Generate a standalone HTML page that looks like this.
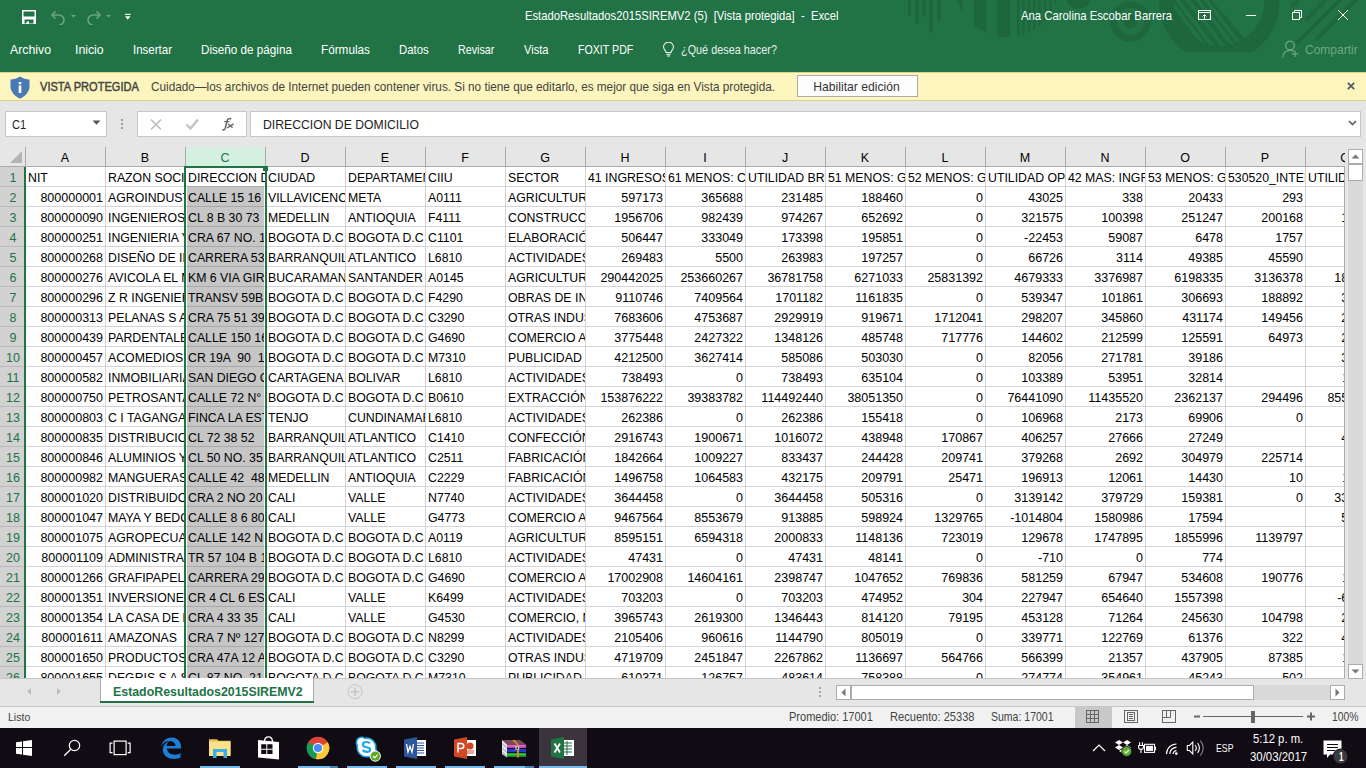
<!DOCTYPE html><html><head><meta charset="utf-8"><style>
*{margin:0;padding:0;box-sizing:border-box}
html,body{width:1366px;height:768px;overflow:hidden;background:#e6e6e6;font-family:"Liberation Sans",sans-serif;position:relative}
.a{position:absolute}
.t{position:absolute;white-space:pre;line-height:1}
.c{position:absolute;height:19px;overflow:hidden;white-space:pre;font-size:12.3px;line-height:23px;color:#000}
.l{padding-left:3px}
.r{text-align:right;padding-right:2px;font-size:12.5px}

</style></head><body>
<div class="a" style="left:0;top:0;width:1366px;height:72px;background:#217346"></div>
<svg class="a" style="left:0;top:0" width="1366" height="72">
<g fill="#1e663e">
<rect x="908" y="0" width="3" height="16"/>
<rect x="915" y="0" width="3.6" height="23.6"/>
<rect x="922.4" y="0" width="3.5" height="16.2"/>
<rect x="929.2" y="0" width="3.8" height="32.4"/>
<rect x="937.3" y="0" width="3.5" height="20.5"/>
<circle cx="1078.6" cy="-4.4" r="13.2"/>
<circle cx="1130.5" cy="21.4" r="7"/>
</g>
<circle cx="1130.5" cy="21.4" r="16.85" fill="none" stroke="#1e663e" stroke-width="6.7"/>
</svg>
<div class="a" style="left:0;top:0;width:1366px;height:72px;clip-path:circle(52px at 1007px -15px)">
<svg class="a" style="left:0;top:0" width="1366" height="72"><g fill="#1e663e">
<rect x="950" y="-20" width="12.8" height="80"/>
<rect x="974" y="-20" width="12.5" height="80"/>
<rect x="997" y="-20" width="13.1" height="80"/>
<rect x="1017" y="-20" width="2.5" height="80"/>
<rect x="1022.2" y="-20" width="2.7" height="80"/>
<rect x="1027.6" y="-20" width="2.9" height="80"/>
<rect x="1033" y="-20" width="2.6" height="80"/>
<rect x="1038.2" y="-20" width="3" height="80"/>
<rect x="1043.7" y="-20" width="2.6" height="80"/>
<rect x="1049.2" y="-20" width="2.6" height="80"/>
<rect x="1054.4" y="-20" width="2.5" height="80"/>
</g></svg></div>
<div class="a" style="left:0;top:0;width:1366px;height:51.7px;overflow:hidden">
<svg class="a" style="left:0;top:0" width="1366" height="72"><circle cx="1219.2" cy="2" r="60.2" fill="#1e663e"/></svg></div>
<div class="a" style="left:0;top:0;width:1366px;height:72px;clip-path:circle(45.5px at 1219px 0.5px)">
<svg class="a" style="left:0;top:0" width="1366" height="72">
<path d="M1206.9 -5 L1260 55.5 L1300 55.5 L1300 -5 Z" fill="#217346"/>
<g stroke="#217346" stroke-width="3.6">
<line x1="1165.7" y1="-5" x2="1209.5" y2="52"/>
<line x1="1173.3" y1="-5" x2="1217.1" y2="52"/>
<line x1="1183.8" y1="-5" x2="1227.6" y2="52"/>
<line x1="1194" y1="-5" x2="1237.8" y2="52"/>
<line x1="1202.1" y1="-5" x2="1245.9" y2="52"/>
</g></svg></div>
<svg class="a" style="left:0;top:0" width="1366" height="72">
<g stroke="#1e663e" stroke-width="4">
<line x1="1291.4" y1="6.75" x2="1300" y2="-1.85"/>
<line x1="1305.4" y1="20.4" x2="1330" y2="-4.2"/>
<line x1="1296.3" y1="43.6" x2="1344" y2="-4.1"/>
<line x1="1315.9" y1="39.7" x2="1360" y2="-4.4"/>
</g>
</svg>
<svg class="a" style="left:22px;top:10px" width="14" height="14" viewBox="0 0 14 14">
<path d="M0 0H14V14H0Z M1.5 1.5V6.5H12.5V1.5Z M2.5 9.5V13.5H4.5V11.5H7V13.5H11.5V9.5Z" fill="#ffffff" fill-rule="evenodd"/></svg>
<svg class="a" style="left:48px;top:7px" width="90" height="18" viewBox="0 0 90 18">
<g fill="none" stroke="#6aa583" stroke-width="1.6">
<path d="M4 8 H11 A5 5 0 0 1 11 18"/><path d="M7.5 4.5 L4 8 L7.5 11.5"/>
<path d="M52 8 H45 A5 5 0 0 0 45 18"/><path d="M48.5 4.5 L52 8 L48.5 11.5"/>
</g>
<path d="M23 8 H28 L25.5 10.5Z" fill="#6aa583"/>
<path d="M58 8 H63 L60.5 10.5Z" fill="#6aa583"/>
<rect x="77" y="6.8" width="5.5" height="1.2" fill="#ffffff"/>
<path d="M77 9.3 H82.5 L79.75 12.8Z" fill="#ffffff"/>
</svg>
<div class="t" style="left:525.00px;top:10px;font-size:12.29px;color:#ffffff;transform:scaleX(0.9153);transform-origin:0 0;">EstadoResultados2015SIREMV2 (5)  [Vista protegida]  -  Excel</div>
<div class="t" style="left:1020.60px;top:10px;font-size:12.29px;color:#ffffff;transform:scaleX(0.9225);transform-origin:0 0;">Ana Carolina Escobar Barrera</div>
<svg class="a" style="left:1190px;top:0" width="176" height="32">
<g fill="none" stroke="#ffffff" stroke-width="1">
<rect x="8.5" y="10.5" width="12" height="9"/>
<line x1="8.5" y1="12.5" x2="20.5" y2="12.5"/>
<line x1="14.5" y1="15" x2="14.5" y2="19.5"/>
<path d="M12.5 16.5 L14.5 14.5 L16.5 16.5"/>
<line x1="56" y1="15.5" x2="66" y2="15.5"/>
<rect x="102.5" y="12.5" width="7" height="7"/>
<path d="M104.5 12.5 V10.5 H111.5 V17.5 H109.5"/>
<path d="M148 10 L158 20 M158 10 L148 20"/>
</g></svg>
<div class="t" style="left:9.80px;top:44px;font-size:12.57px;color:#ffffff;transform:scaleX(0.9804);transform-origin:0 0;">Archivo</div>
<div class="t" style="left:75.00px;top:44px;font-size:12.57px;color:#ffffff;transform:scaleX(0.9778);transform-origin:0 0;">Inicio</div>
<div class="t" style="left:133.00px;top:44px;font-size:12.57px;color:#ffffff;transform:scaleX(0.9152);transform-origin:0 0;">Insertar</div>
<div class="t" style="left:201.00px;top:44px;font-size:12.57px;color:#ffffff;transform:scaleX(0.9293);transform-origin:0 0;">Diseño de página</div>
<div class="t" style="left:321.00px;top:44px;font-size:12.57px;color:#ffffff;transform:scaleX(0.9348);transform-origin:0 0;">Fórmulas</div>
<div class="t" style="left:399.00px;top:44px;font-size:12.57px;color:#ffffff;transform:scaleX(0.9022);transform-origin:0 0;">Datos</div>
<div class="t" style="left:458.40px;top:44px;font-size:12.57px;color:#ffffff;transform:scaleX(0.8519);transform-origin:0 0;">Revisar</div>
<div class="t" style="left:523.90px;top:44px;font-size:12.57px;color:#ffffff;transform:scaleX(0.8856);transform-origin:0 0;">Vista</div>
<div class="t" style="left:578.30px;top:44px;font-size:12.57px;color:#ffffff;transform:scaleX(0.8468);transform-origin:0 0;">FOXIT PDF</div>
<div class="t" style="left:680.70px;top:44px;font-size:12.57px;color:#e6f0ea;transform:scaleX(0.8640);transform-origin:0 0;">¿Qué desea hacer?</div>
<svg class="a" style="left:662px;top:42px" width="13" height="15" viewBox="0 0 13 15">
<path d="M4 10.5 C4 8.5 1.5 7.5 1.5 4.8 A5 4.6 0 0 1 11.5 4.8 C11.5 7.5 9 8.5 9 10.5 Z" fill="none" stroke="#e6f0ea" stroke-width="1.1"/>
<line x1="4.3" y1="12.3" x2="8.7" y2="12.3" stroke="#e6f0ea" stroke-width="1.1"/>
<line x1="5" y1="14" x2="8" y2="14" stroke="#e6f0ea" stroke-width="1.1"/></svg>
<svg class="a" style="left:1282px;top:40px" width="20" height="18" viewBox="0 0 20 18">
<g fill="none" stroke="#6fa585" stroke-width="1.2">
<circle cx="8" cy="5.5" r="4.3"/>
<path d="M0.8 17.5 C1 12.5 4 10.3 8 10.3 C9.5 10.3 10.8 10.7 11.8 11.3"/>
<path d="M13 10.5 V17 M9.8 13.8 H16.2"/>
</g></svg>
<div class="t" style="left:1305.30px;top:44px;font-size:12.57px;color:#6fa585;transform:scaleX(0.9550);transform-origin:0 0;">Compartir</div>
<div class="a" style="left:0;top:72px;width:1366px;height:28px;background:#fcf5bd"></div>
<div class="a" style="left:0;top:100px;width:1366px;height:1px;background:#d9d28e"></div>
<div class="a" style="left:0;top:72px;width:1366px;height:1px;background:#d9d48e"></div>
<svg class="a" style="left:10px;top:76px" width="20" height="23" viewBox="0 0 20 23">
<path d="M10 0.5 C13 2.5 16 3.3 19.5 3.5 V10 C19.5 16 15 20.5 10 22.5 C5 20.5 0.5 16 0.5 10 V3.5 C4 3.3 7 2.5 10 0.5Z" fill="#4a7ab5"/>
<rect x="8.7" y="6" width="2.6" height="2.3" fill="#fff"/><rect x="8.7" y="9.5" width="2.6" height="7.5" fill="#fff"/>
</svg>
<div class="t" style="left:40.20px;top:81px;font-size:12.15px;color:#444;transform:scaleX(0.9124);transform-origin:0 0;-webkit-text-stroke:0.45px #444;">VISTA PROTEGIDA</div>
<div class="t" style="left:150.60px;top:81px;font-size:12.15px;color:#444;transform:scaleX(0.9686);transform-origin:0 0;">Cuidado—los archivos de Internet pueden contener virus. Si no tiene que editarlo, es mejor que siga en Vista protegida.</div>
<div class="a" style="left:797px;top:75px;width:121px;height:22px;background:#fdfdfd;border:1px solid #ababab"></div>
<div class="t" style="left:813.30px;top:81px;font-size:12.15px;color:#333;">Habilitar edición</div>
<svg class="a" style="left:1345px;top:80px" width="12" height="12"><path d="M2.8 2.8 L9.2 9.2 M9.2 2.8 L2.8 9.2" stroke="#505560" stroke-width="1.7"/></svg>
<div class="a" style="left:5px;top:111px;width:102px;height:26px;background:#fff;border:1px solid #c6c6c6"></div>
<div class="t" style="left:12.40px;top:119px;font-size:12.57px;color:#222;transform:scaleX(0.8826);transform-origin:0 0;">C1</div>
<svg class="a" style="left:92px;top:120px" width="9" height="6"><path d="M0.5 0.5 H8.5 L4.5 4.8Z" fill="#555"/></svg>
<div class="a" style="left:121px;top:119px;width:2px;height:2px;background:#9a9a9a"></div>
<div class="a" style="left:121px;top:123px;width:2px;height:2px;background:#9a9a9a"></div>
<div class="a" style="left:121px;top:127px;width:2px;height:2px;background:#9a9a9a"></div>
<div class="a" style="left:137px;top:111px;width:110px;height:26px;background:#fff;border:1px solid #c6c6c6"></div>
<svg class="a" style="left:137px;top:111px" width="110" height="26">
<path d="M14 8.5 L24 18.5 M24 8.5 L14 18.5" stroke="#bababa" stroke-width="1.5" fill="none"/>
<path d="M49.5 13.5 L53.5 17.5 L61 8.5" stroke="#c4c4c4" stroke-width="2.4" fill="none"/>
</svg>
<svg class="a" style="left:200px;top:108px" width="40" height="30"><g fill="none" stroke="#6a6a6a"><path d="M31.2 11.2 C29.8 10 27.6 10.4 27.1 13 L25.3 20.3 C24.8 22 23.5 22.2 22.4 21.4" stroke-width="1.6"/><path d="M24.2 13.6 H29.4" stroke-width="1.3"/><path d="M28.2 15.9 L32.6 19.8 M27.3 19.9 L33.6 15.9" stroke-width="1.4"/></g></svg>
<div class="a" style="left:250px;top:111px;width:1111px;height:26px;background:#fff;border:1px solid #c6c6c6"></div>
<div class="t" style="left:263.00px;top:119px;font-size:12.29px;color:#222;transform:scaleX(0.9932);transform-origin:0 0;">DIRECCION DE DOMICILIO</div>
<svg class="a" style="left:1347px;top:119px" width="11" height="8"><path d="M2 2 L5.5 5.5 L9 2" stroke="#606060" stroke-width="1.7" fill="none"/></svg>
<div class="a" style="left:0;top:0;width:1345px;height:678px;overflow:hidden">
<div class="a" style="left:0;top:148px;width:1345px;height:18px;background:#e6e6e6"></div>
<div class="a" style="left:185px;top:148px;width:80px;height:18px;background:#d3f0e0"></div>
<svg class="a" style="left:0;top:148px" width="25" height="18"><path d="M22 3 L22 15 L10 15 Z" fill="#b4b4b4"/></svg>
<div class="a" style="left:25px;top:147px;width:1px;height:19px;background:#ababab"></div>
<div class="a" style="left:105px;top:147px;width:1px;height:19px;background:#ababab"></div>
<div class="a" style="left:185px;top:147px;width:1px;height:19px;background:#ababab"></div>
<div class="a" style="left:265px;top:147px;width:1px;height:19px;background:#ababab"></div>
<div class="a" style="left:345px;top:147px;width:1px;height:19px;background:#ababab"></div>
<div class="a" style="left:425px;top:147px;width:1px;height:19px;background:#ababab"></div>
<div class="a" style="left:505px;top:147px;width:1px;height:19px;background:#ababab"></div>
<div class="a" style="left:585px;top:147px;width:1px;height:19px;background:#ababab"></div>
<div class="a" style="left:665px;top:147px;width:1px;height:19px;background:#ababab"></div>
<div class="a" style="left:745px;top:147px;width:1px;height:19px;background:#ababab"></div>
<div class="a" style="left:825px;top:147px;width:1px;height:19px;background:#ababab"></div>
<div class="a" style="left:905px;top:147px;width:1px;height:19px;background:#ababab"></div>
<div class="a" style="left:985px;top:147px;width:1px;height:19px;background:#ababab"></div>
<div class="a" style="left:1065px;top:147px;width:1px;height:19px;background:#ababab"></div>
<div class="a" style="left:1145px;top:147px;width:1px;height:19px;background:#ababab"></div>
<div class="a" style="left:1225px;top:147px;width:1px;height:19px;background:#ababab"></div>
<div class="a" style="left:1305px;top:147px;width:1px;height:19px;background:#ababab"></div>
<div class="a" style="left:0;top:166px;width:1345px;height:1px;background:#ababab"></div>
<div class="t" style="left:25px;top:152px;width:80px;text-align:center;font-size:12.5px;color:#000">A</div>
<div class="t" style="left:105px;top:152px;width:80px;text-align:center;font-size:12.5px;color:#000">B</div>
<div class="t" style="left:185px;top:152px;width:80px;text-align:center;font-size:12.5px;color:#217346">C</div>
<div class="t" style="left:265px;top:152px;width:80px;text-align:center;font-size:12.5px;color:#000">D</div>
<div class="t" style="left:345px;top:152px;width:80px;text-align:center;font-size:12.5px;color:#000">E</div>
<div class="t" style="left:425px;top:152px;width:80px;text-align:center;font-size:12.5px;color:#000">F</div>
<div class="t" style="left:505px;top:152px;width:80px;text-align:center;font-size:12.5px;color:#000">G</div>
<div class="t" style="left:585px;top:152px;width:80px;text-align:center;font-size:12.5px;color:#000">H</div>
<div class="t" style="left:665px;top:152px;width:80px;text-align:center;font-size:12.5px;color:#000">I</div>
<div class="t" style="left:745px;top:152px;width:80px;text-align:center;font-size:12.5px;color:#000">J</div>
<div class="t" style="left:825px;top:152px;width:80px;text-align:center;font-size:12.5px;color:#000">K</div>
<div class="t" style="left:905px;top:152px;width:80px;text-align:center;font-size:12.5px;color:#000">L</div>
<div class="t" style="left:985px;top:152px;width:80px;text-align:center;font-size:12.5px;color:#000">M</div>
<div class="t" style="left:1065px;top:152px;width:80px;text-align:center;font-size:12.5px;color:#000">N</div>
<div class="t" style="left:1145px;top:152px;width:80px;text-align:center;font-size:12.5px;color:#000">O</div>
<div class="t" style="left:1225px;top:152px;width:80px;text-align:center;font-size:12.5px;color:#000">P</div>
<div class="t" style="left:1305px;top:152px;width:80px;text-align:center;font-size:12.5px;color:#000">Q</div>
<div class="a" style="left:25px;top:167px;width:1320px;height:512px;background:#fff"></div>
<div class="a" style="left:0;top:167px;width:24px;height:512px;background:#d2d2d2"></div>
<div class="a" style="left:0;top:186px;width:24px;height:1px;background:#bababa"></div>
<div class="t" style="left:0;top:172px;width:26px;text-align:center;font-size:12.5px;color:#217346">1</div>
<div class="a" style="left:0;top:206px;width:24px;height:1px;background:#bababa"></div>
<div class="t" style="left:0;top:192px;width:26px;text-align:center;font-size:12.5px;color:#217346">2</div>
<div class="a" style="left:0;top:226px;width:24px;height:1px;background:#bababa"></div>
<div class="t" style="left:0;top:212px;width:26px;text-align:center;font-size:12.5px;color:#217346">3</div>
<div class="a" style="left:0;top:246px;width:24px;height:1px;background:#bababa"></div>
<div class="t" style="left:0;top:232px;width:26px;text-align:center;font-size:12.5px;color:#217346">4</div>
<div class="a" style="left:0;top:266px;width:24px;height:1px;background:#bababa"></div>
<div class="t" style="left:0;top:252px;width:26px;text-align:center;font-size:12.5px;color:#217346">5</div>
<div class="a" style="left:0;top:286px;width:24px;height:1px;background:#bababa"></div>
<div class="t" style="left:0;top:272px;width:26px;text-align:center;font-size:12.5px;color:#217346">6</div>
<div class="a" style="left:0;top:306px;width:24px;height:1px;background:#bababa"></div>
<div class="t" style="left:0;top:292px;width:26px;text-align:center;font-size:12.5px;color:#217346">7</div>
<div class="a" style="left:0;top:326px;width:24px;height:1px;background:#bababa"></div>
<div class="t" style="left:0;top:312px;width:26px;text-align:center;font-size:12.5px;color:#217346">8</div>
<div class="a" style="left:0;top:346px;width:24px;height:1px;background:#bababa"></div>
<div class="t" style="left:0;top:332px;width:26px;text-align:center;font-size:12.5px;color:#217346">9</div>
<div class="a" style="left:0;top:366px;width:24px;height:1px;background:#bababa"></div>
<div class="t" style="left:0;top:352px;width:26px;text-align:center;font-size:12.5px;color:#217346">10</div>
<div class="a" style="left:0;top:386px;width:24px;height:1px;background:#bababa"></div>
<div class="t" style="left:0;top:372px;width:26px;text-align:center;font-size:12.5px;color:#217346">11</div>
<div class="a" style="left:0;top:406px;width:24px;height:1px;background:#bababa"></div>
<div class="t" style="left:0;top:392px;width:26px;text-align:center;font-size:12.5px;color:#217346">12</div>
<div class="a" style="left:0;top:426px;width:24px;height:1px;background:#bababa"></div>
<div class="t" style="left:0;top:412px;width:26px;text-align:center;font-size:12.5px;color:#217346">13</div>
<div class="a" style="left:0;top:446px;width:24px;height:1px;background:#bababa"></div>
<div class="t" style="left:0;top:432px;width:26px;text-align:center;font-size:12.5px;color:#217346">14</div>
<div class="a" style="left:0;top:466px;width:24px;height:1px;background:#bababa"></div>
<div class="t" style="left:0;top:452px;width:26px;text-align:center;font-size:12.5px;color:#217346">15</div>
<div class="a" style="left:0;top:486px;width:24px;height:1px;background:#bababa"></div>
<div class="t" style="left:0;top:472px;width:26px;text-align:center;font-size:12.5px;color:#217346">16</div>
<div class="a" style="left:0;top:506px;width:24px;height:1px;background:#bababa"></div>
<div class="t" style="left:0;top:492px;width:26px;text-align:center;font-size:12.5px;color:#217346">17</div>
<div class="a" style="left:0;top:526px;width:24px;height:1px;background:#bababa"></div>
<div class="t" style="left:0;top:512px;width:26px;text-align:center;font-size:12.5px;color:#217346">18</div>
<div class="a" style="left:0;top:546px;width:24px;height:1px;background:#bababa"></div>
<div class="t" style="left:0;top:532px;width:26px;text-align:center;font-size:12.5px;color:#217346">19</div>
<div class="a" style="left:0;top:566px;width:24px;height:1px;background:#bababa"></div>
<div class="t" style="left:0;top:552px;width:26px;text-align:center;font-size:12.5px;color:#217346">20</div>
<div class="a" style="left:0;top:586px;width:24px;height:1px;background:#bababa"></div>
<div class="t" style="left:0;top:572px;width:26px;text-align:center;font-size:12.5px;color:#217346">21</div>
<div class="a" style="left:0;top:606px;width:24px;height:1px;background:#bababa"></div>
<div class="t" style="left:0;top:592px;width:26px;text-align:center;font-size:12.5px;color:#217346">22</div>
<div class="a" style="left:0;top:626px;width:24px;height:1px;background:#bababa"></div>
<div class="t" style="left:0;top:612px;width:26px;text-align:center;font-size:12.5px;color:#217346">23</div>
<div class="a" style="left:0;top:646px;width:24px;height:1px;background:#bababa"></div>
<div class="t" style="left:0;top:632px;width:26px;text-align:center;font-size:12.5px;color:#217346">24</div>
<div class="a" style="left:0;top:666px;width:24px;height:1px;background:#bababa"></div>
<div class="t" style="left:0;top:652px;width:26px;text-align:center;font-size:12.5px;color:#217346">25</div>
<div class="a" style="left:0;top:686px;width:24px;height:1px;background:#bababa"></div>
<div class="t" style="left:0;top:672px;width:26px;text-align:center;font-size:12.5px;color:#217346">26</div>
<div class="a" style="left:187px;top:187px;width:77px;height:492px;background:#c6c6c6"></div>
<div class="a" style="left:25px;top:186px;width:1320px;height:1px;background:#d4d4d4"></div>
<div class="a" style="left:187px;top:186px;width:77px;height:1px;background:#aaaaaa"></div>
<div class="a" style="left:25px;top:206px;width:1320px;height:1px;background:#d4d4d4"></div>
<div class="a" style="left:187px;top:206px;width:77px;height:1px;background:#aaaaaa"></div>
<div class="a" style="left:25px;top:226px;width:1320px;height:1px;background:#d4d4d4"></div>
<div class="a" style="left:187px;top:226px;width:77px;height:1px;background:#aaaaaa"></div>
<div class="a" style="left:25px;top:246px;width:1320px;height:1px;background:#d4d4d4"></div>
<div class="a" style="left:187px;top:246px;width:77px;height:1px;background:#aaaaaa"></div>
<div class="a" style="left:25px;top:266px;width:1320px;height:1px;background:#d4d4d4"></div>
<div class="a" style="left:187px;top:266px;width:77px;height:1px;background:#aaaaaa"></div>
<div class="a" style="left:25px;top:286px;width:1320px;height:1px;background:#d4d4d4"></div>
<div class="a" style="left:187px;top:286px;width:77px;height:1px;background:#aaaaaa"></div>
<div class="a" style="left:25px;top:306px;width:1320px;height:1px;background:#d4d4d4"></div>
<div class="a" style="left:187px;top:306px;width:77px;height:1px;background:#aaaaaa"></div>
<div class="a" style="left:25px;top:326px;width:1320px;height:1px;background:#d4d4d4"></div>
<div class="a" style="left:187px;top:326px;width:77px;height:1px;background:#aaaaaa"></div>
<div class="a" style="left:25px;top:346px;width:1320px;height:1px;background:#d4d4d4"></div>
<div class="a" style="left:187px;top:346px;width:77px;height:1px;background:#aaaaaa"></div>
<div class="a" style="left:25px;top:366px;width:1320px;height:1px;background:#d4d4d4"></div>
<div class="a" style="left:187px;top:366px;width:77px;height:1px;background:#aaaaaa"></div>
<div class="a" style="left:25px;top:386px;width:1320px;height:1px;background:#d4d4d4"></div>
<div class="a" style="left:187px;top:386px;width:77px;height:1px;background:#aaaaaa"></div>
<div class="a" style="left:25px;top:406px;width:1320px;height:1px;background:#d4d4d4"></div>
<div class="a" style="left:187px;top:406px;width:77px;height:1px;background:#aaaaaa"></div>
<div class="a" style="left:25px;top:426px;width:1320px;height:1px;background:#d4d4d4"></div>
<div class="a" style="left:187px;top:426px;width:77px;height:1px;background:#aaaaaa"></div>
<div class="a" style="left:25px;top:446px;width:1320px;height:1px;background:#d4d4d4"></div>
<div class="a" style="left:187px;top:446px;width:77px;height:1px;background:#aaaaaa"></div>
<div class="a" style="left:25px;top:466px;width:1320px;height:1px;background:#d4d4d4"></div>
<div class="a" style="left:187px;top:466px;width:77px;height:1px;background:#aaaaaa"></div>
<div class="a" style="left:25px;top:486px;width:1320px;height:1px;background:#d4d4d4"></div>
<div class="a" style="left:187px;top:486px;width:77px;height:1px;background:#aaaaaa"></div>
<div class="a" style="left:25px;top:506px;width:1320px;height:1px;background:#d4d4d4"></div>
<div class="a" style="left:187px;top:506px;width:77px;height:1px;background:#aaaaaa"></div>
<div class="a" style="left:25px;top:526px;width:1320px;height:1px;background:#d4d4d4"></div>
<div class="a" style="left:187px;top:526px;width:77px;height:1px;background:#aaaaaa"></div>
<div class="a" style="left:25px;top:546px;width:1320px;height:1px;background:#d4d4d4"></div>
<div class="a" style="left:187px;top:546px;width:77px;height:1px;background:#aaaaaa"></div>
<div class="a" style="left:25px;top:566px;width:1320px;height:1px;background:#d4d4d4"></div>
<div class="a" style="left:187px;top:566px;width:77px;height:1px;background:#aaaaaa"></div>
<div class="a" style="left:25px;top:586px;width:1320px;height:1px;background:#d4d4d4"></div>
<div class="a" style="left:187px;top:586px;width:77px;height:1px;background:#aaaaaa"></div>
<div class="a" style="left:25px;top:606px;width:1320px;height:1px;background:#d4d4d4"></div>
<div class="a" style="left:187px;top:606px;width:77px;height:1px;background:#aaaaaa"></div>
<div class="a" style="left:25px;top:626px;width:1320px;height:1px;background:#d4d4d4"></div>
<div class="a" style="left:187px;top:626px;width:77px;height:1px;background:#aaaaaa"></div>
<div class="a" style="left:25px;top:646px;width:1320px;height:1px;background:#d4d4d4"></div>
<div class="a" style="left:187px;top:646px;width:77px;height:1px;background:#aaaaaa"></div>
<div class="a" style="left:25px;top:666px;width:1320px;height:1px;background:#d4d4d4"></div>
<div class="a" style="left:187px;top:666px;width:77px;height:1px;background:#aaaaaa"></div>
<div class="a" style="left:25px;top:686px;width:1320px;height:1px;background:#d4d4d4"></div>
<div class="a" style="left:187px;top:686px;width:77px;height:1px;background:#aaaaaa"></div>
<div class="a" style="left:105px;top:167px;width:1px;height:512px;background:#d4d4d4"></div>
<div class="a" style="left:185px;top:167px;width:1px;height:512px;background:#d4d4d4"></div>
<div class="a" style="left:265px;top:167px;width:1px;height:512px;background:#d4d4d4"></div>
<div class="a" style="left:345px;top:167px;width:1px;height:512px;background:#d4d4d4"></div>
<div class="a" style="left:425px;top:167px;width:1px;height:512px;background:#d4d4d4"></div>
<div class="a" style="left:505px;top:167px;width:1px;height:512px;background:#d4d4d4"></div>
<div class="a" style="left:585px;top:167px;width:1px;height:512px;background:#d4d4d4"></div>
<div class="a" style="left:665px;top:167px;width:1px;height:512px;background:#d4d4d4"></div>
<div class="a" style="left:745px;top:167px;width:1px;height:512px;background:#d4d4d4"></div>
<div class="a" style="left:825px;top:167px;width:1px;height:512px;background:#d4d4d4"></div>
<div class="a" style="left:905px;top:167px;width:1px;height:512px;background:#d4d4d4"></div>
<div class="a" style="left:985px;top:167px;width:1px;height:512px;background:#d4d4d4"></div>
<div class="a" style="left:1065px;top:167px;width:1px;height:512px;background:#d4d4d4"></div>
<div class="a" style="left:1145px;top:167px;width:1px;height:512px;background:#d4d4d4"></div>
<div class="a" style="left:1225px;top:167px;width:1px;height:512px;background:#d4d4d4"></div>
<div class="a" style="left:1305px;top:167px;width:1px;height:512px;background:#d4d4d4"></div>
<div class="c l" style="left:25px;top:167px;width:80px">NIT</div>
<div class="c l" style="left:105px;top:167px;width:80px">RAZON SOCIAL</div>
<div class="c l" style="left:185px;top:167px;width:80px">DIRECCION DE DOMICILIO</div>
<div class="c l" style="left:265px;top:167px;width:80px">CIUDAD</div>
<div class="c l" style="left:345px;top:167px;width:80px">DEPARTAMENTO</div>
<div class="c l" style="left:425px;top:167px;width:80px">CIIU</div>
<div class="c l" style="left:505px;top:167px;width:80px">SECTOR</div>
<div class="c l" style="left:585px;top:167px;width:80px">41 INGRESOS OPERAC</div>
<div class="c l" style="left:665px;top:167px;width:80px">61 MENOS: COSTO</div>
<div class="c l" style="left:745px;top:167px;width:80px">UTILIDAD BRUTA</div>
<div class="c l" style="left:825px;top:167px;width:80px">51 MENOS: GASTOS</div>
<div class="c l" style="left:905px;top:167px;width:80px">52 MENOS: GASTOS</div>
<div class="c l" style="left:985px;top:167px;width:80px">UTILIDAD OPERAC</div>
<div class="c l" style="left:1065px;top:167px;width:80px">42 MAS: INGRESOS</div>
<div class="c l" style="left:1145px;top:167px;width:80px">53 MENOS: GASTOS</div>
<div class="c l" style="left:1225px;top:167px;width:80px">530520_INTERESES</div>
<div class="c l" style="left:1305px;top:167px;width:39px">UTILIDAD ANTES</div>
<div class="c r" style="left:25px;top:187px;width:80px">800000001</div>
<div class="c l" style="left:105px;top:187px;width:80px">AGROINDUSTRIAL</div>
<div class="c l" style="left:185px;top:187px;width:79px">CALLE 15 16 44</div>
<div class="c l" style="left:265px;top:187px;width:80px">VILLAVICENCIO</div>
<div class="c l" style="left:345px;top:187px;width:80px">META</div>
<div class="c l" style="left:425px;top:187px;width:80px">A0111</div>
<div class="c l" style="left:505px;top:187px;width:80px">AGRICULTURA</div>
<div class="c r" style="left:585px;top:187px;width:80px">597173</div>
<div class="c r" style="left:665px;top:187px;width:80px">365688</div>
<div class="c r" style="left:745px;top:187px;width:80px">231485</div>
<div class="c r" style="left:825px;top:187px;width:80px">188460</div>
<div class="c r" style="left:905px;top:187px;width:80px">0</div>
<div class="c r" style="left:985px;top:187px;width:80px">43025</div>
<div class="c r" style="left:1065px;top:187px;width:80px">338</div>
<div class="c r" style="left:1145px;top:187px;width:80px">20433</div>
<div class="c r" style="left:1225px;top:187px;width:80px">293</div>
<div class="c r" style="left:25px;top:207px;width:80px">800000090</div>
<div class="c l" style="left:105px;top:207px;width:80px">INGENIEROS ASOC</div>
<div class="c l" style="left:185px;top:207px;width:79px">CL 8 B 30 73</div>
<div class="c l" style="left:265px;top:207px;width:80px">MEDELLIN</div>
<div class="c l" style="left:345px;top:207px;width:80px">ANTIOQUIA</div>
<div class="c l" style="left:425px;top:207px;width:80px">F4111</div>
<div class="c l" style="left:505px;top:207px;width:80px">CONSTRUCCIÓN</div>
<div class="c r" style="left:585px;top:207px;width:80px">1956706</div>
<div class="c r" style="left:665px;top:207px;width:80px">982439</div>
<div class="c r" style="left:745px;top:207px;width:80px">974267</div>
<div class="c r" style="left:825px;top:207px;width:80px">652692</div>
<div class="c r" style="left:905px;top:207px;width:80px">0</div>
<div class="c r" style="left:985px;top:207px;width:80px">321575</div>
<div class="c r" style="left:1065px;top:207px;width:80px">100398</div>
<div class="c r" style="left:1145px;top:207px;width:80px">251247</div>
<div class="c r" style="left:1225px;top:207px;width:80px">200168</div>
<div class="a" style="left:1305px;top:207px;width:39px;height:19px;overflow:hidden"><div class="c r" style="left:0;top:0;width:80px">123456</div></div>
<div class="c r" style="left:25px;top:227px;width:80px">800000251</div>
<div class="c l" style="left:105px;top:227px;width:80px">INGENIERIA Y</div>
<div class="c l" style="left:185px;top:227px;width:79px">CRA 67 NO. 10</div>
<div class="c l" style="left:265px;top:227px;width:80px">BOGOTA D.C</div>
<div class="c l" style="left:345px;top:227px;width:80px">BOGOTA D.C</div>
<div class="c l" style="left:425px;top:227px;width:80px">C1101</div>
<div class="c l" style="left:505px;top:227px;width:80px">ELABORACIÓN</div>
<div class="c r" style="left:585px;top:227px;width:80px">506447</div>
<div class="c r" style="left:665px;top:227px;width:80px">333049</div>
<div class="c r" style="left:745px;top:227px;width:80px">173398</div>
<div class="c r" style="left:825px;top:227px;width:80px">195851</div>
<div class="c r" style="left:905px;top:227px;width:80px">0</div>
<div class="c r" style="left:985px;top:227px;width:80px">-22453</div>
<div class="c r" style="left:1065px;top:227px;width:80px">59087</div>
<div class="c r" style="left:1145px;top:227px;width:80px">6478</div>
<div class="c r" style="left:1225px;top:227px;width:80px">1757</div>
<div class="c r" style="left:25px;top:247px;width:80px">800000268</div>
<div class="c l" style="left:105px;top:247px;width:80px">DISEÑO DE INTERIORES</div>
<div class="c l" style="left:185px;top:247px;width:79px">CARRERA 53 </div>
<div class="c l" style="left:265px;top:247px;width:80px">BARRANQUILLA</div>
<div class="c l" style="left:345px;top:247px;width:80px">ATLANTICO</div>
<div class="c l" style="left:425px;top:247px;width:80px">L6810</div>
<div class="c l" style="left:505px;top:247px;width:80px">ACTIVIDADES</div>
<div class="c r" style="left:585px;top:247px;width:80px">269483</div>
<div class="c r" style="left:665px;top:247px;width:80px">5500</div>
<div class="c r" style="left:745px;top:247px;width:80px">263983</div>
<div class="c r" style="left:825px;top:247px;width:80px">197257</div>
<div class="c r" style="left:905px;top:247px;width:80px">0</div>
<div class="c r" style="left:985px;top:247px;width:80px">66726</div>
<div class="c r" style="left:1065px;top:247px;width:80px">3114</div>
<div class="c r" style="left:1145px;top:247px;width:80px">49385</div>
<div class="c r" style="left:1225px;top:247px;width:80px">45590</div>
<div class="c r" style="left:25px;top:267px;width:80px">800000276</div>
<div class="c l" style="left:105px;top:267px;width:80px">AVICOLA EL MADRONO</div>
<div class="c l" style="left:185px;top:267px;width:79px">KM 6 VIA GIRON</div>
<div class="c l" style="left:265px;top:267px;width:80px">BUCARAMANGA</div>
<div class="c l" style="left:345px;top:267px;width:80px">SANTANDER</div>
<div class="c l" style="left:425px;top:267px;width:80px">A0145</div>
<div class="c l" style="left:505px;top:267px;width:80px">AGRICULTURA</div>
<div class="c r" style="left:585px;top:267px;width:80px">290442025</div>
<div class="c r" style="left:665px;top:267px;width:80px">253660267</div>
<div class="c r" style="left:745px;top:267px;width:80px">36781758</div>
<div class="c r" style="left:825px;top:267px;width:80px">6271033</div>
<div class="c r" style="left:905px;top:267px;width:80px">25831392</div>
<div class="c r" style="left:985px;top:267px;width:80px">4679333</div>
<div class="c r" style="left:1065px;top:267px;width:80px">3376987</div>
<div class="c r" style="left:1145px;top:267px;width:80px">6198335</div>
<div class="c r" style="left:1225px;top:267px;width:80px">3136378</div>
<div class="a" style="left:1305px;top:267px;width:39px;height:19px;overflow:hidden"><div class="c r" style="left:0;top:0;width:80px">1812345</div></div>
<div class="c r" style="left:25px;top:287px;width:80px">800000296</div>
<div class="c l" style="left:105px;top:287px;width:80px">Z R INGENIERIA</div>
<div class="c l" style="left:185px;top:287px;width:79px">TRANSV 59B 12</div>
<div class="c l" style="left:265px;top:287px;width:80px">BOGOTA D.C</div>
<div class="c l" style="left:345px;top:287px;width:80px">BOGOTA D.C</div>
<div class="c l" style="left:425px;top:287px;width:80px">F4290</div>
<div class="c l" style="left:505px;top:287px;width:80px">OBRAS DE INGENIERIA</div>
<div class="c r" style="left:585px;top:287px;width:80px">9110746</div>
<div class="c r" style="left:665px;top:287px;width:80px">7409564</div>
<div class="c r" style="left:745px;top:287px;width:80px">1701182</div>
<div class="c r" style="left:825px;top:287px;width:80px">1161835</div>
<div class="c r" style="left:905px;top:287px;width:80px">0</div>
<div class="c r" style="left:985px;top:287px;width:80px">539347</div>
<div class="c r" style="left:1065px;top:287px;width:80px">101861</div>
<div class="c r" style="left:1145px;top:287px;width:80px">306693</div>
<div class="c r" style="left:1225px;top:287px;width:80px">188892</div>
<div class="a" style="left:1305px;top:287px;width:39px;height:19px;overflow:hidden"><div class="c r" style="left:0;top:0;width:80px">312345</div></div>
<div class="c r" style="left:25px;top:307px;width:80px">800000313</div>
<div class="c l" style="left:105px;top:307px;width:80px">PELANAS S A S</div>
<div class="c l" style="left:185px;top:307px;width:79px">CRA 75 51 39</div>
<div class="c l" style="left:265px;top:307px;width:80px">BOGOTA D.C</div>
<div class="c l" style="left:345px;top:307px;width:80px">BOGOTA D.C</div>
<div class="c l" style="left:425px;top:307px;width:80px">C3290</div>
<div class="c l" style="left:505px;top:307px;width:80px">OTRAS INDUSTRIAS</div>
<div class="c r" style="left:585px;top:307px;width:80px">7683606</div>
<div class="c r" style="left:665px;top:307px;width:80px">4753687</div>
<div class="c r" style="left:745px;top:307px;width:80px">2929919</div>
<div class="c r" style="left:825px;top:307px;width:80px">919671</div>
<div class="c r" style="left:905px;top:307px;width:80px">1712041</div>
<div class="c r" style="left:985px;top:307px;width:80px">298207</div>
<div class="c r" style="left:1065px;top:307px;width:80px">345860</div>
<div class="c r" style="left:1145px;top:307px;width:80px">431174</div>
<div class="c r" style="left:1225px;top:307px;width:80px">149456</div>
<div class="a" style="left:1305px;top:307px;width:39px;height:19px;overflow:hidden"><div class="c r" style="left:0;top:0;width:80px">212345</div></div>
<div class="c r" style="left:25px;top:327px;width:80px">800000439</div>
<div class="c l" style="left:105px;top:327px;width:80px">PARDENTALES</div>
<div class="c l" style="left:185px;top:327px;width:79px">CALLE 150 16 56</div>
<div class="c l" style="left:265px;top:327px;width:80px">BOGOTA D.C</div>
<div class="c l" style="left:345px;top:327px;width:80px">BOGOTA D.C</div>
<div class="c l" style="left:425px;top:327px;width:80px">G4690</div>
<div class="c l" style="left:505px;top:327px;width:80px">COMERCIO AL</div>
<div class="c r" style="left:585px;top:327px;width:80px">3775448</div>
<div class="c r" style="left:665px;top:327px;width:80px">2427322</div>
<div class="c r" style="left:745px;top:327px;width:80px">1348126</div>
<div class="c r" style="left:825px;top:327px;width:80px">485748</div>
<div class="c r" style="left:905px;top:327px;width:80px">717776</div>
<div class="c r" style="left:985px;top:327px;width:80px">144602</div>
<div class="c r" style="left:1065px;top:327px;width:80px">212599</div>
<div class="c r" style="left:1145px;top:327px;width:80px">125591</div>
<div class="c r" style="left:1225px;top:327px;width:80px">64973</div>
<div class="a" style="left:1305px;top:327px;width:39px;height:19px;overflow:hidden"><div class="c r" style="left:0;top:0;width:80px">212345</div></div>
<div class="c r" style="left:25px;top:347px;width:80px">800000457</div>
<div class="c l" style="left:105px;top:347px;width:80px">ACOMEDIOS S A</div>
<div class="c l" style="left:185px;top:347px;width:79px">CR 19A  90  14</div>
<div class="c l" style="left:265px;top:347px;width:80px">BOGOTA D.C</div>
<div class="c l" style="left:345px;top:347px;width:80px">BOGOTA D.C</div>
<div class="c l" style="left:425px;top:347px;width:80px">M7310</div>
<div class="c l" style="left:505px;top:347px;width:80px">PUBLICIDAD</div>
<div class="c r" style="left:585px;top:347px;width:80px">4212500</div>
<div class="c r" style="left:665px;top:347px;width:80px">3627414</div>
<div class="c r" style="left:745px;top:347px;width:80px">585086</div>
<div class="c r" style="left:825px;top:347px;width:80px">503030</div>
<div class="c r" style="left:905px;top:347px;width:80px">0</div>
<div class="c r" style="left:985px;top:347px;width:80px">82056</div>
<div class="c r" style="left:1065px;top:347px;width:80px">271781</div>
<div class="c r" style="left:1145px;top:347px;width:80px">39186</div>
<div class="a" style="left:1305px;top:347px;width:39px;height:19px;overflow:hidden"><div class="c r" style="left:0;top:0;width:80px">312345</div></div>
<div class="c r" style="left:25px;top:367px;width:80px">800000582</div>
<div class="c l" style="left:105px;top:367px;width:80px">INMOBILIARIA</div>
<div class="c l" style="left:185px;top:367px;width:79px">SAN DIEGO CALLE</div>
<div class="c l" style="left:265px;top:367px;width:80px">CARTAGENA</div>
<div class="c l" style="left:345px;top:367px;width:80px">BOLIVAR</div>
<div class="c l" style="left:425px;top:367px;width:80px">L6810</div>
<div class="c l" style="left:505px;top:367px;width:80px">ACTIVIDADES</div>
<div class="c r" style="left:585px;top:367px;width:80px">738493</div>
<div class="c r" style="left:665px;top:367px;width:80px">0</div>
<div class="c r" style="left:745px;top:367px;width:80px">738493</div>
<div class="c r" style="left:825px;top:367px;width:80px">635104</div>
<div class="c r" style="left:905px;top:367px;width:80px">0</div>
<div class="c r" style="left:985px;top:367px;width:80px">103389</div>
<div class="c r" style="left:1065px;top:367px;width:80px">53951</div>
<div class="c r" style="left:1145px;top:367px;width:80px">32814</div>
<div class="a" style="left:1305px;top:367px;width:39px;height:19px;overflow:hidden"><div class="c r" style="left:0;top:0;width:80px">112345</div></div>
<div class="c r" style="left:25px;top:387px;width:80px">800000750</div>
<div class="c l" style="left:105px;top:387px;width:80px">PETROSANTANDER</div>
<div class="c l" style="left:185px;top:387px;width:79px">CALLE 72 N° 8</div>
<div class="c l" style="left:265px;top:387px;width:80px">BOGOTA D.C</div>
<div class="c l" style="left:345px;top:387px;width:80px">BOGOTA D.C</div>
<div class="c l" style="left:425px;top:387px;width:80px">B0610</div>
<div class="c l" style="left:505px;top:387px;width:80px">EXTRACCIÓN</div>
<div class="c r" style="left:585px;top:387px;width:80px">153876222</div>
<div class="c r" style="left:665px;top:387px;width:80px">39383782</div>
<div class="c r" style="left:745px;top:387px;width:80px">114492440</div>
<div class="c r" style="left:825px;top:387px;width:80px">38051350</div>
<div class="c r" style="left:905px;top:387px;width:80px">0</div>
<div class="c r" style="left:985px;top:387px;width:80px">76441090</div>
<div class="c r" style="left:1065px;top:387px;width:80px">11435520</div>
<div class="c r" style="left:1145px;top:387px;width:80px">2362137</div>
<div class="c r" style="left:1225px;top:387px;width:80px">294496</div>
<div class="a" style="left:1305px;top:387px;width:39px;height:19px;overflow:hidden"><div class="c r" style="left:0;top:0;width:80px">85512345</div></div>
<div class="c r" style="left:25px;top:407px;width:80px">800000803</div>
<div class="c l" style="left:105px;top:407px;width:80px">C I TAGANGA</div>
<div class="c l" style="left:185px;top:407px;width:79px">FINCA LA ESTANCIA</div>
<div class="c l" style="left:265px;top:407px;width:80px">TENJO</div>
<div class="c l" style="left:345px;top:407px;width:80px">CUNDINAMARCA</div>
<div class="c l" style="left:425px;top:407px;width:80px">L6810</div>
<div class="c l" style="left:505px;top:407px;width:80px">ACTIVIDADES</div>
<div class="c r" style="left:585px;top:407px;width:80px">262386</div>
<div class="c r" style="left:665px;top:407px;width:80px">0</div>
<div class="c r" style="left:745px;top:407px;width:80px">262386</div>
<div class="c r" style="left:825px;top:407px;width:80px">155418</div>
<div class="c r" style="left:905px;top:407px;width:80px">0</div>
<div class="c r" style="left:985px;top:407px;width:80px">106968</div>
<div class="c r" style="left:1065px;top:407px;width:80px">2173</div>
<div class="c r" style="left:1145px;top:407px;width:80px">69906</div>
<div class="c r" style="left:1225px;top:407px;width:80px">0</div>
<div class="c r" style="left:25px;top:427px;width:80px">800000835</div>
<div class="c l" style="left:105px;top:427px;width:80px">DISTRIBUCIONES</div>
<div class="c l" style="left:185px;top:427px;width:79px">CL 72 38 52</div>
<div class="c l" style="left:265px;top:427px;width:80px">BARRANQUILLA</div>
<div class="c l" style="left:345px;top:427px;width:80px">ATLANTICO</div>
<div class="c l" style="left:425px;top:427px;width:80px">C1410</div>
<div class="c l" style="left:505px;top:427px;width:80px">CONFECCIÓN</div>
<div class="c r" style="left:585px;top:427px;width:80px">2916743</div>
<div class="c r" style="left:665px;top:427px;width:80px">1900671</div>
<div class="c r" style="left:745px;top:427px;width:80px">1016072</div>
<div class="c r" style="left:825px;top:427px;width:80px">438948</div>
<div class="c r" style="left:905px;top:427px;width:80px">170867</div>
<div class="c r" style="left:985px;top:427px;width:80px">406257</div>
<div class="c r" style="left:1065px;top:427px;width:80px">27666</div>
<div class="c r" style="left:1145px;top:427px;width:80px">27249</div>
<div class="a" style="left:1305px;top:427px;width:39px;height:19px;overflow:hidden"><div class="c r" style="left:0;top:0;width:80px">412345</div></div>
<div class="c r" style="left:25px;top:447px;width:80px">800000846</div>
<div class="c l" style="left:105px;top:447px;width:80px">ALUMINIOS Y</div>
<div class="c l" style="left:185px;top:447px;width:79px">CL 50 NO. 35 40</div>
<div class="c l" style="left:265px;top:447px;width:80px">BARRANQUILLA</div>
<div class="c l" style="left:345px;top:447px;width:80px">ATLANTICO</div>
<div class="c l" style="left:425px;top:447px;width:80px">C2511</div>
<div class="c l" style="left:505px;top:447px;width:80px">FABRICACIÓN</div>
<div class="c r" style="left:585px;top:447px;width:80px">1842664</div>
<div class="c r" style="left:665px;top:447px;width:80px">1009227</div>
<div class="c r" style="left:745px;top:447px;width:80px">833437</div>
<div class="c r" style="left:825px;top:447px;width:80px">244428</div>
<div class="c r" style="left:905px;top:447px;width:80px">209741</div>
<div class="c r" style="left:985px;top:447px;width:80px">379268</div>
<div class="c r" style="left:1065px;top:447px;width:80px">2692</div>
<div class="c r" style="left:1145px;top:447px;width:80px">304979</div>
<div class="c r" style="left:1225px;top:447px;width:80px">225714</div>
<div class="c r" style="left:25px;top:467px;width:80px">800000982</div>
<div class="c l" style="left:105px;top:467px;width:80px">MANGUERAS Y</div>
<div class="c l" style="left:185px;top:467px;width:79px">CALLE 42  48 </div>
<div class="c l" style="left:265px;top:467px;width:80px">MEDELLIN</div>
<div class="c l" style="left:345px;top:467px;width:80px">ANTIOQUIA</div>
<div class="c l" style="left:425px;top:467px;width:80px">C2229</div>
<div class="c l" style="left:505px;top:467px;width:80px">FABRICACIÓN</div>
<div class="c r" style="left:585px;top:467px;width:80px">1496758</div>
<div class="c r" style="left:665px;top:467px;width:80px">1064583</div>
<div class="c r" style="left:745px;top:467px;width:80px">432175</div>
<div class="c r" style="left:825px;top:467px;width:80px">209791</div>
<div class="c r" style="left:905px;top:467px;width:80px">25471</div>
<div class="c r" style="left:985px;top:467px;width:80px">196913</div>
<div class="c r" style="left:1065px;top:467px;width:80px">12061</div>
<div class="c r" style="left:1145px;top:467px;width:80px">14430</div>
<div class="c r" style="left:1225px;top:467px;width:80px">10</div>
<div class="a" style="left:1305px;top:467px;width:39px;height:19px;overflow:hidden"><div class="c r" style="left:0;top:0;width:80px">112345</div></div>
<div class="c r" style="left:25px;top:487px;width:80px">800001020</div>
<div class="c l" style="left:105px;top:487px;width:80px">DISTRIBUIDORA</div>
<div class="c l" style="left:185px;top:487px;width:79px">CRA 2 NO 20 50</div>
<div class="c l" style="left:265px;top:487px;width:80px">CALI</div>
<div class="c l" style="left:345px;top:487px;width:80px">VALLE</div>
<div class="c l" style="left:425px;top:487px;width:80px">N7740</div>
<div class="c l" style="left:505px;top:487px;width:80px">ACTIVIDADES</div>
<div class="c r" style="left:585px;top:487px;width:80px">3644458</div>
<div class="c r" style="left:665px;top:487px;width:80px">0</div>
<div class="c r" style="left:745px;top:487px;width:80px">3644458</div>
<div class="c r" style="left:825px;top:487px;width:80px">505316</div>
<div class="c r" style="left:905px;top:487px;width:80px">0</div>
<div class="c r" style="left:985px;top:487px;width:80px">3139142</div>
<div class="c r" style="left:1065px;top:487px;width:80px">379729</div>
<div class="c r" style="left:1145px;top:487px;width:80px">159381</div>
<div class="c r" style="left:1225px;top:487px;width:80px">0</div>
<div class="a" style="left:1305px;top:487px;width:39px;height:19px;overflow:hidden"><div class="c r" style="left:0;top:0;width:80px">3312345</div></div>
<div class="c r" style="left:25px;top:507px;width:80px">800001047</div>
<div class="c l" style="left:105px;top:507px;width:80px">MAYA Y BEDOYA</div>
<div class="c l" style="left:185px;top:507px;width:79px">CALLE 8 6 80</div>
<div class="c l" style="left:265px;top:507px;width:80px">CALI</div>
<div class="c l" style="left:345px;top:507px;width:80px">VALLE</div>
<div class="c l" style="left:425px;top:507px;width:80px">G4773</div>
<div class="c l" style="left:505px;top:507px;width:80px">COMERCIO AL</div>
<div class="c r" style="left:585px;top:507px;width:80px">9467564</div>
<div class="c r" style="left:665px;top:507px;width:80px">8553679</div>
<div class="c r" style="left:745px;top:507px;width:80px">913885</div>
<div class="c r" style="left:825px;top:507px;width:80px">598924</div>
<div class="c r" style="left:905px;top:507px;width:80px">1329765</div>
<div class="c r" style="left:985px;top:507px;width:80px">-1014804</div>
<div class="c r" style="left:1065px;top:507px;width:80px">1580986</div>
<div class="c r" style="left:1145px;top:507px;width:80px">17594</div>
<div class="a" style="left:1305px;top:507px;width:39px;height:19px;overflow:hidden"><div class="c r" style="left:0;top:0;width:80px">512345</div></div>
<div class="c r" style="left:25px;top:527px;width:80px">800001075</div>
<div class="c l" style="left:105px;top:527px;width:80px">AGROPECUARIA</div>
<div class="c l" style="left:185px;top:527px;width:79px">CALLE 142 N 12</div>
<div class="c l" style="left:265px;top:527px;width:80px">BOGOTA D.C</div>
<div class="c l" style="left:345px;top:527px;width:80px">BOGOTA D.C</div>
<div class="c l" style="left:425px;top:527px;width:80px">A0119</div>
<div class="c l" style="left:505px;top:527px;width:80px">AGRICULTURA</div>
<div class="c r" style="left:585px;top:527px;width:80px">8595151</div>
<div class="c r" style="left:665px;top:527px;width:80px">6594318</div>
<div class="c r" style="left:745px;top:527px;width:80px">2000833</div>
<div class="c r" style="left:825px;top:527px;width:80px">1148136</div>
<div class="c r" style="left:905px;top:527px;width:80px">723019</div>
<div class="c r" style="left:985px;top:527px;width:80px">129678</div>
<div class="c r" style="left:1065px;top:527px;width:80px">1747895</div>
<div class="c r" style="left:1145px;top:527px;width:80px">1855996</div>
<div class="c r" style="left:1225px;top:527px;width:80px">1139797</div>
<div class="c r" style="left:25px;top:547px;width:80px">800001109</div>
<div class="c l" style="left:105px;top:547px;width:80px">ADMINISTRADORA</div>
<div class="c l" style="left:185px;top:547px;width:79px">TR 57 104 B 10</div>
<div class="c l" style="left:265px;top:547px;width:80px">BOGOTA D.C</div>
<div class="c l" style="left:345px;top:547px;width:80px">BOGOTA D.C</div>
<div class="c l" style="left:425px;top:547px;width:80px">L6810</div>
<div class="c l" style="left:505px;top:547px;width:80px">ACTIVIDADES</div>
<div class="c r" style="left:585px;top:547px;width:80px">47431</div>
<div class="c r" style="left:665px;top:547px;width:80px">0</div>
<div class="c r" style="left:745px;top:547px;width:80px">47431</div>
<div class="c r" style="left:825px;top:547px;width:80px">48141</div>
<div class="c r" style="left:905px;top:547px;width:80px">0</div>
<div class="c r" style="left:985px;top:547px;width:80px">-710</div>
<div class="c r" style="left:1065px;top:547px;width:80px">0</div>
<div class="c r" style="left:1145px;top:547px;width:80px">774</div>
<div class="c r" style="left:25px;top:567px;width:80px">800001266</div>
<div class="c l" style="left:105px;top:567px;width:80px">GRAFIPAPEL </div>
<div class="c l" style="left:185px;top:567px;width:79px">CARRERA 29 22</div>
<div class="c l" style="left:265px;top:567px;width:80px">BOGOTA D.C</div>
<div class="c l" style="left:345px;top:567px;width:80px">BOGOTA D.C</div>
<div class="c l" style="left:425px;top:567px;width:80px">G4690</div>
<div class="c l" style="left:505px;top:567px;width:80px">COMERCIO AL</div>
<div class="c r" style="left:585px;top:567px;width:80px">17002908</div>
<div class="c r" style="left:665px;top:567px;width:80px">14604161</div>
<div class="c r" style="left:745px;top:567px;width:80px">2398747</div>
<div class="c r" style="left:825px;top:567px;width:80px">1047652</div>
<div class="c r" style="left:905px;top:567px;width:80px">769836</div>
<div class="c r" style="left:985px;top:567px;width:80px">581259</div>
<div class="c r" style="left:1065px;top:567px;width:80px">67947</div>
<div class="c r" style="left:1145px;top:567px;width:80px">534608</div>
<div class="c r" style="left:1225px;top:567px;width:80px">190776</div>
<div class="a" style="left:1305px;top:567px;width:39px;height:19px;overflow:hidden"><div class="c r" style="left:0;top:0;width:80px">112345</div></div>
<div class="c r" style="left:25px;top:587px;width:80px">800001351</div>
<div class="c l" style="left:105px;top:587px;width:80px">INVERSIONES</div>
<div class="c l" style="left:185px;top:587px;width:79px">CR 4 CL 6 ESQ</div>
<div class="c l" style="left:265px;top:587px;width:80px">CALI</div>
<div class="c l" style="left:345px;top:587px;width:80px">VALLE</div>
<div class="c l" style="left:425px;top:587px;width:80px">K6499</div>
<div class="c l" style="left:505px;top:587px;width:80px">ACTIVIDADES</div>
<div class="c r" style="left:585px;top:587px;width:80px">703203</div>
<div class="c r" style="left:665px;top:587px;width:80px">0</div>
<div class="c r" style="left:745px;top:587px;width:80px">703203</div>
<div class="c r" style="left:825px;top:587px;width:80px">474952</div>
<div class="c r" style="left:905px;top:587px;width:80px">304</div>
<div class="c r" style="left:985px;top:587px;width:80px">227947</div>
<div class="c r" style="left:1065px;top:587px;width:80px">654640</div>
<div class="c r" style="left:1145px;top:587px;width:80px">1557398</div>
<div class="a" style="left:1305px;top:587px;width:39px;height:19px;overflow:hidden"><div class="c r" style="left:0;top:0;width:80px">-612345</div></div>
<div class="c r" style="left:25px;top:607px;width:80px">800001354</div>
<div class="c l" style="left:105px;top:607px;width:80px">LA CASA DE LA</div>
<div class="c l" style="left:185px;top:607px;width:79px">CRA 4 33 35</div>
<div class="c l" style="left:265px;top:607px;width:80px">CALI</div>
<div class="c l" style="left:345px;top:607px;width:80px">VALLE</div>
<div class="c l" style="left:425px;top:607px;width:80px">G4530</div>
<div class="c l" style="left:505px;top:607px;width:80px">COMERCIO, MANT</div>
<div class="c r" style="left:585px;top:607px;width:80px">3965743</div>
<div class="c r" style="left:665px;top:607px;width:80px">2619300</div>
<div class="c r" style="left:745px;top:607px;width:80px">1346443</div>
<div class="c r" style="left:825px;top:607px;width:80px">814120</div>
<div class="c r" style="left:905px;top:607px;width:80px">79195</div>
<div class="c r" style="left:985px;top:607px;width:80px">453128</div>
<div class="c r" style="left:1065px;top:607px;width:80px">71264</div>
<div class="c r" style="left:1145px;top:607px;width:80px">245630</div>
<div class="c r" style="left:1225px;top:607px;width:80px">104798</div>
<div class="a" style="left:1305px;top:607px;width:39px;height:19px;overflow:hidden"><div class="c r" style="left:0;top:0;width:80px">212345</div></div>
<div class="c r" style="left:25px;top:627px;width:80px">800001611</div>
<div class="c l" style="left:105px;top:627px;width:80px">AMAZONAS </div>
<div class="c l" style="left:185px;top:627px;width:79px">CRA 7 Nº 127</div>
<div class="c l" style="left:265px;top:627px;width:80px">BOGOTA D.C</div>
<div class="c l" style="left:345px;top:627px;width:80px">BOGOTA D.C</div>
<div class="c l" style="left:425px;top:627px;width:80px">N8299</div>
<div class="c l" style="left:505px;top:627px;width:80px">ACTIVIDADES</div>
<div class="c r" style="left:585px;top:627px;width:80px">2105406</div>
<div class="c r" style="left:665px;top:627px;width:80px">960616</div>
<div class="c r" style="left:745px;top:627px;width:80px">1144790</div>
<div class="c r" style="left:825px;top:627px;width:80px">805019</div>
<div class="c r" style="left:905px;top:627px;width:80px">0</div>
<div class="c r" style="left:985px;top:627px;width:80px">339771</div>
<div class="c r" style="left:1065px;top:627px;width:80px">122769</div>
<div class="c r" style="left:1145px;top:627px;width:80px">61376</div>
<div class="c r" style="left:1225px;top:627px;width:80px">322</div>
<div class="a" style="left:1305px;top:627px;width:39px;height:19px;overflow:hidden"><div class="c r" style="left:0;top:0;width:80px">412345</div></div>
<div class="c r" style="left:25px;top:647px;width:80px">800001650</div>
<div class="c l" style="left:105px;top:647px;width:80px">PRODUCTOS</div>
<div class="c l" style="left:185px;top:647px;width:79px">CRA 47A 12 A 10</div>
<div class="c l" style="left:265px;top:647px;width:80px">BOGOTA D.C</div>
<div class="c l" style="left:345px;top:647px;width:80px">BOGOTA D.C</div>
<div class="c l" style="left:425px;top:647px;width:80px">C3290</div>
<div class="c l" style="left:505px;top:647px;width:80px">OTRAS INDUSTRIAS</div>
<div class="c r" style="left:585px;top:647px;width:80px">4719709</div>
<div class="c r" style="left:665px;top:647px;width:80px">2451847</div>
<div class="c r" style="left:745px;top:647px;width:80px">2267862</div>
<div class="c r" style="left:825px;top:647px;width:80px">1136697</div>
<div class="c r" style="left:905px;top:647px;width:80px">564766</div>
<div class="c r" style="left:985px;top:647px;width:80px">566399</div>
<div class="c r" style="left:1065px;top:647px;width:80px">21357</div>
<div class="c r" style="left:1145px;top:647px;width:80px">437905</div>
<div class="c r" style="left:1225px;top:647px;width:80px">87385</div>
<div class="a" style="left:1305px;top:647px;width:39px;height:19px;overflow:hidden"><div class="c r" style="left:0;top:0;width:80px">112345</div></div>
<div class="c r" style="left:25px;top:667px;width:80px">800001655</div>
<div class="c l" style="left:105px;top:667px;width:80px">DEGRIS S A S</div>
<div class="c l" style="left:185px;top:667px;width:79px">CL 87 NO. 21 30</div>
<div class="c l" style="left:265px;top:667px;width:80px">BOGOTA D.C</div>
<div class="c l" style="left:345px;top:667px;width:80px">BOGOTA D.C</div>
<div class="c l" style="left:425px;top:667px;width:80px">M7310</div>
<div class="c l" style="left:505px;top:667px;width:80px">PUBLICIDAD</div>
<div class="c r" style="left:585px;top:667px;width:80px">610371</div>
<div class="c r" style="left:665px;top:667px;width:80px">126757</div>
<div class="c r" style="left:745px;top:667px;width:80px">483614</div>
<div class="c r" style="left:825px;top:667px;width:80px">758388</div>
<div class="c r" style="left:905px;top:667px;width:80px">0</div>
<div class="c r" style="left:985px;top:667px;width:80px">274774</div>
<div class="c r" style="left:1065px;top:667px;width:80px">354961</div>
<div class="c r" style="left:1145px;top:667px;width:80px">45243</div>
<div class="c r" style="left:1225px;top:667px;width:80px">502</div>
<div class="a" style="left:24px;top:167px;width:2px;height:512px;background:#217346"></div>
<div class="a" style="left:184px;top:166px;width:2px;height:513px;background:#217346"></div>
<div class="a" style="left:265px;top:166px;width:2px;height:513px;background:#217346"></div>
<div class="a" style="left:184px;top:166px;width:83px;height:2px;background:#217346"></div>
<div class="a" style="left:263px;top:166px;width:5px;height:5px;background:#217346"></div>
</div>
<div class="a" style="left:1344px;top:166px;width:1px;height:513px;background:#ababab"></div>
<div class="a" style="left:0;top:678px;width:1345px;height:1px;background:#c6c6c6"></div>
<div class="a" style="left:1348px;top:181px;width:15px;height:483px;background:#dadada"></div>
<div class="a" style="left:1348px;top:149px;width:15px;height:15px;background:#fff;border:1px solid #ababab"></div>
<svg class="a" style="left:1348px;top:149px" width="15" height="15"><path d="M3.5 9.5 H11.5 L7.5 5.5Z" fill="#777"/></svg>
<div class="a" style="left:1348px;top:164px;width:15px;height:17px;background:#fff;border:1px solid #ababab"></div>
<div class="a" style="left:1348px;top:664px;width:15px;height:15px;background:#fff;border:1px solid #ababab"></div>
<svg class="a" style="left:1348px;top:664px" width="15" height="15"><path d="M3.5 5.5 H11.5 L7.5 9.5Z" fill="#777"/></svg>
<div class="a" style="left:0;top:679px;width:1366px;height:27px;background:#e6e6e6"></div>
<svg class="a" style="left:20px;top:684px" width="50" height="15"><path d="M7 7.5 L11 4 V11Z M37 4 V11 L41 7.5Z" fill="#bdbdbd"/></svg>
<div class="a" style="left:100px;top:678px;width:214px;height:25px;background:#fff;border-left:1px solid #ababab;border-right:1px solid #ababab"></div>
<div class="a" style="left:100px;top:701px;width:214px;height:2px;background:#217346"></div>
<div class="t" style="left:113.00px;top:685px;font-size:13.69px;color:#217346;font-weight:bold;transform:scaleX(0.9035);transform-origin:0 0;">EstadoResultados2015SIREMV2</div>
<svg class="a" style="left:346px;top:683px" width="18" height="18"><circle cx="9" cy="8.7" r="7" fill="none" stroke="#c6c6c6" stroke-width="1"/>
<path d="M9 4.5 V13 M4.7 8.7 H13.3" stroke="#c6c6c6" stroke-width="1.6"/></svg>
<div class="a" style="left:819px;top:687px;width:2px;height:2px;background:#a6a6a6"></div>
<div class="a" style="left:819px;top:691px;width:2px;height:2px;background:#a6a6a6"></div>
<div class="a" style="left:819px;top:695px;width:2px;height:2px;background:#a6a6a6"></div>
<div class="a" style="left:836px;top:685px;width:509px;height:15px;background:#d9d9d9"></div>
<div class="a" style="left:836px;top:685px;width:15px;height:15px;background:#fff;border:1px solid #ababab"></div>
<svg class="a" style="left:836px;top:685px" width="15" height="15"><path d="M5.5 7.5 L9.5 3.5 V11.5Z" fill="#777"/></svg>
<div class="a" style="left:851px;top:685px;width:403px;height:15px;background:#fff;border:1px solid #ababab"></div>
<div class="a" style="left:1330px;top:685px;width:15px;height:15px;background:#fff;border:1px solid #ababab"></div>
<svg class="a" style="left:1330px;top:685px" width="15" height="15"><path d="M9.5 7.5 L5.5 3.5 V11.5Z" fill="#777"/></svg>
<div class="a" style="left:0;top:706px;width:1366px;height:1px;background:#c6c6c6"></div>
<div class="a" style="left:0;top:707px;width:1366px;height:21px;background:#f1f1f1"></div>
<div class="t" style="left:8.00px;top:712px;font-size:11.59px;color:#444;transform:scaleX(0.9117);transform-origin:0 0;">Listo</div>
<div class="t" style="left:789.30px;top:711px;font-size:12.29px;color:#444;transform:scaleX(0.8964);transform-origin:0 0;">Promedio: 17001</div>
<div class="t" style="left:890.40px;top:711px;font-size:12.29px;color:#444;transform:scaleX(0.9029);transform-origin:0 0;">Recuento: 25338</div>
<div class="t" style="left:991.40px;top:711px;font-size:12.29px;color:#444;transform:scaleX(0.8560);transform-origin:0 0;">Suma: 17001</div>
<div class="a" style="left:1075px;top:707px;width:37px;height:21px;background:#c8c8c8"></div>
<svg class="a" style="left:1060px;top:706px" width="306" height="22">
<g fill="none" stroke="#666" stroke-width="1">
<rect x="26.5" y="4.5" width="12" height="12"/><path d="M30.5 4.5V16.5 M34.5 4.5V16.5 M26.5 8.5H38.5 M26.5 12.5H38.5"/>
<rect x="64.5" y="4.5" width="13" height="12"/><rect x="67.5" y="6.5" width="7" height="8"/><path d="M69 8.5H73 M69 10.5H73 M69 12.5H73"/>
<rect x="102.5" y="4.5" width="13" height="12"/><path d="M102.5 11.5H110.5V4.5 M106.5 4.5 V11.5"/>
<path d="M134 10.5H140"/>
<path d="M143 10.5H243"/>
<path d="M247 10.5H255 M251 6.5V14.5" stroke-width="2"/>
</g>
<rect x="191" y="5" width="4" height="12" fill="#666"/>
<path d="M134 10.5H140" stroke="#666" stroke-width="2"/>
</svg>
<div class="t" style="left:1331.50px;top:711px;font-size:12.29px;color:#444;transform:scaleX(0.8422);transform-origin:0 0;">100%</div><div class="a" style="left:0;top:728px;width:1366px;height:40px;background:#110b13"></div>
<div class="a" style="left:539px;top:728px;width:48px;height:40px;background:#3b343c"></div>
<svg class="a" style="left:16px;top:740px" width="17" height="17" viewBox="0 0 17 17">
<path d="M0 2.2 L6 1.4 V7 H0Z M7 1.25 L16 0 V7 H7Z M0 8 H6 V14.6 L0 13.8Z M7 8 H16 V16 L7 14.75Z" fill="#fff"/></svg>
<svg class="a" style="left:62px;top:738px" width="20" height="20"><circle cx="12.5" cy="7.5" r="5.2" fill="none" stroke="#fff" stroke-width="1.2"/><path d="M8.8 11.2 L2.2 17.8" stroke="#fff" stroke-width="1.3"/></svg>
<svg class="a" style="left:109px;top:740px" width="23" height="16"><g fill="none" stroke="#fff" stroke-width="1.2"><rect x="5.1" y="1.1" width="12" height="13.5"/><path d="M3.5 3.1 H1.1 V12.6 H3.5 M18.7 3.1 H21.1 V12.6 H18.7"/></g></svg>
<svg class="a" style="left:160px;top:737px" width="22" height="22" viewBox="0 0 22 22">
<path d="M1 10 C2 3 8 0 12.5 0.5 C18 1 21.5 5 21 11.5 H7 C7.3 16 11.5 18.5 17 17.5 C18.5 17.2 19.5 16.8 20.5 16 V20.5 C18 21.8 15 22.2 12 21.8 C5.5 21 2 16 3 11 C4 7 7 4.5 10 4 C7 5.5 6.5 8 6.6 9 H15.5 C15.5 6 13.5 4.3 10 4 C6 3.5 2.5 6 1 10Z" fill="#1c7ed6"/></svg>
<svg class="a" style="left:208px;top:738px" width="24" height="22" viewBox="0 0 24 22">
<path d="M1 1.2 H9 L10.5 2.7 H22.5 V18 H1Z" fill="#e8c250"/><path d="M1 3.5 H22.5 V18 H1Z" fill="#fbe18b"/>
<path d="M5 11 H19 V20 H15.5 V14 H8.5 V20 H5Z" fill="#3aaee8"/></svg>
<svg class="a" style="left:258px;top:736px" width="22" height="24" viewBox="0 0 22 24">
<path d="M6.5 6 C6.5 2 8 0.8 10.5 0.8 C13 0.8 14.5 2 14.5 6" fill="none" stroke="#fff" stroke-width="1.3"/>
<path d="M0 4 L21 6 V23.5 L0 21.5Z" fill="#fff"/>
<path d="M3.2 8.3 H8.3 V12.8 H3.2Z M9.3 8.3 H14.5 V12.8 H9.3Z M3.2 13.8 H8.3 V18 H3.2Z M9.3 13.8 H14.5 V18 H9.3Z" fill="#110b13"/></svg>
<svg class="a" style="left:306px;top:736px" width="24" height="24" viewBox="0 0 24 24">
<circle cx="12" cy="12" r="11.3" fill="#db4437"/>
<path d="M12 12 L2.2 6.35 A11.3 11.3 0 0 0 10 23.1Z" fill="#0f9d58"/>
<path d="M12 12 L21.8 6.35 A11.3 11.3 0 0 1 10 23.1Z" fill="#fcc934"/>
<circle cx="12" cy="12" r="5.2" fill="#fff"/><circle cx="12" cy="12" r="4.1" fill="#4a8af4"/></svg>
<svg class="a" style="left:355px;top:736px" width="26" height="26" viewBox="0 0 26 26">
<g fill="#fff" stroke="#1ea8e8" stroke-width="1.6">
<path d="M6.5 1.2 C8 1.2 9 1.8 9.8 2.4 C10.4 2.2 10.9 2.1 11.5 2.1 C16.7 2.1 20.8 6.2 20.8 11.4 C20.8 12 20.7 12.6 20.6 13.1 C21.3 14 21.7 15 21.7 16.3 C21.7 19 19.5 21.3 16.7 21.3 C15.6 21.3 14.6 21 13.8 20.4 C13.1 20.6 12.3 20.7 11.5 20.7 C6.3 20.7 2.2 16.5 2.2 11.4 C2.2 10.7 2.3 10 2.4 9.4 C1.8 8.6 1.5 7.6 1.5 6.4 C1.5 3.5 3.8 1.2 6.5 1.2Z"/>
</g>
<path d="M15 7.3 C14 6.3 12.7 6 11.4 6 C9.3 6 7.8 7 7.8 8.7 C7.8 12 15.2 10.6 15.2 13.5 C15.2 14.9 13.8 15.8 11.7 15.8 C10 15.8 8.5 15.1 7.6 14" fill="none" stroke="#1ea8e8" stroke-width="2.2"/>
<circle cx="20.3" cy="20.1" r="5.6" fill="#fff"/><circle cx="20.3" cy="20.1" r="4.7" fill="#5ca81e"/>
<path d="M18 20.2 L19.7 21.8 L22.7 18.6" fill="none" stroke="#fff" stroke-width="1.2"/></svg>
<svg class="a" style="left:404px;top:737px" width="23" height="22" viewBox="0 0 23 22">
<path d="M10 3 H22 V19 H10Z" fill="#fff"/><path d="M12 6 H20 M12 8.5 H20 M12 11 H20 M12 13.5 H20 M12 16 H20" stroke="#2b579a" stroke-width="1"/>
<path d="M0 2.5 L13 0 V22 L0 19.5Z" fill="#2b579a"/>
<path d="M2.5 7 L4 15 L6 9.5 L8 15 L9.5 7" fill="none" stroke="#fff" stroke-width="1.3"/></svg>
<svg class="a" style="left:454px;top:737px" width="23" height="22" viewBox="0 0 23 22">
<path d="M10 3 H22 V19 H10Z" fill="#fff"/><circle cx="16" cy="9" r="3.5" fill="#d24726"/><path d="M12.5 14 H20 M12.5 16 H20" stroke="#d24726" stroke-width="1"/>
<path d="M0 2.5 L13 0 V22 L0 19.5Z" fill="#d24726"/>
<path d="M4 15.5 V6.5 H7 C9 6.5 9.8 7.5 9.8 9 C9.8 10.6 9 11.5 7 11.5 H4" fill="none" stroke="#fff" stroke-width="1.5"/></svg>
<svg class="a" style="left:502px;top:739px" width="25" height="19" viewBox="0 0 25 19">
<path d="M0 1 L18 1 L24 5.5 L5 5.5Z" fill="#7a4a5a"/>
<rect x="5" y="5.5" width="19" height="3.5" fill="#c04aa8"/><rect x="5" y="6.3" width="19" height="1" fill="#e080d0"/>
<rect x="5" y="10" width="19" height="3.2" fill="#2a36d0"/>
<rect x="5" y="14.3" width="19" height="3.5" fill="#1ca82a"/><rect x="5" y="14.6" width="19" height="1" fill="#40e050"/>
<path d="M0 1 L5 5.5 V18.5 L0 15Z" fill="#e4e4ee"/>
<path d="M0.5 5 L4.5 8.5 M0.5 9.5 L4.5 13 M0.5 13.5 L4.5 17" stroke="#777" stroke-width="0.7"/>
<path d="M10 1 L15 6 V18.5 H17 V6 L13 1Z" fill="#d08a28"/>
<rect x="13.3" y="7.2" width="4" height="3.6" fill="#c8c8c8"/><rect x="14.6" y="8.2" width="1.4" height="2" fill="#333"/>
</svg>
<svg class="a" style="left:551px;top:737px" width="24" height="22" viewBox="0 0 24 22">
<path d="M10 3 H23 V19 H10Z" fill="#fff"/><path d="M12 6 H21 M12 9 H21 M12 12 H21 M12 15 H21 M16 4 V18" stroke="#217346" stroke-width="1"/>
<path d="M0 2.5 L13 0 V22 L0 19.5Z" fill="#217346"/>
<path d="M3.5 6.5 L9 15.5 M9 6.5 L3.5 15.5" stroke="#fff" stroke-width="1.8"/></svg>
<div class="a" style="left:200px;top:766px;width:40px;height:2px;background:#76b9ed"></div>
<div class="a" style="left:298px;top:766px;width:32px;height:2px;background:#76b9ed"></div>
<div class="a" style="left:330px;top:766px;width:8px;height:2px;background:#4f7fa8"></div>
<div class="a" style="left:347px;top:766px;width:40px;height:2px;background:#76b9ed"></div>
<div class="a" style="left:396px;top:766px;width:40px;height:2px;background:#76b9ed"></div>
<div class="a" style="left:445px;top:766px;width:40px;height:2px;background:#76b9ed"></div>
<div class="a" style="left:494px;top:766px;width:31px;height:2px;background:#76b9ed"></div>
<div class="a" style="left:525px;top:766px;width:9px;height:2px;background:#4f7fa8"></div>
<div class="a" style="left:539px;top:766px;width:48px;height:2px;background:#76b9ed"></div>
<svg class="a" style="left:1090px;top:736px" width="120" height="24">
<path d="M3 15 L9 9 L15 15" fill="none" stroke="#fff" stroke-width="1.2"/>
<g fill="#fff"><path d="M25 6.5 L29 4 L33 6.5 L29 9Z M33 6.5 L37 4 L41 6.5 L37 9Z M25 11.5 L29 9 L33 11.5 L29 14Z M33 11.5 L37 9 L41 11.5 L37 14Z M29 15 L33 12.5 L37 15 L33 17.5Z"/></g>
<circle cx="36.7" cy="15.4" r="5" fill="#5cb030" stroke="#110b13" stroke-width="0.8"/>
<path d="M34.5 15.5 L36.1 17 L38.9 14" fill="none" stroke="#fff" stroke-width="1.1"/>
<g fill="none" stroke="#fff" stroke-width="1.1">
<path d="M49.6 6.3 V9.5 M52.4 6.3 V9.5 M48.6 9.5 H53.4 V11 A2.4 2.4 0 0 1 48.6 11Z M51 13.4 V17"/>
<rect x="54.5" y="8.3" width="10" height="8.1"/>
<path d="M76.5 18 A10 10 0 0 1 86.5 8" stroke-width="1.2"/><path d="M79.8 18 A6.7 6.7 0 0 1 86.5 11.3" stroke-width="1.2"/><path d="M83.1 18 A3.4 3.4 0 0 1 86.5 14.6" stroke-width="1.2"/>
<path d="M97.3 9.5 H99.5 L102.8 6.2 V17.8 L99.5 14.5 H97.3Z"/>
<path d="M105 9 A4.5 4.5 0 0 1 105 15"/><path d="M107.5 7 A7.5 7.5 0 0 1 107.5 17"/><path d="M110.3 4.5 A11 11 0 0 1 110.3 19.5" stroke="#888"/>
</g>
<rect x="56" y="9.8" width="7" height="5.1" fill="#fff"/><rect x="65" y="10.5" width="1" height="3.8" fill="#fff"/>
<circle cx="86.3" cy="17.6" r="1.3" fill="#fff"/>
</svg>
<div class="t" style="left:1215.90px;top:743px;font-size:11.17px;color:#fff;transform:scaleX(0.7831);transform-origin:0 0;">ESP</div>
<div class="t" style="left:1252.80px;top:733px;font-size:12.57px;color:#fff;transform:scaleX(0.8985);transform-origin:0 0;">5:12 p. m.</div>
<div class="t" style="left:1249.50px;top:751px;font-size:12.57px;color:#fff;transform:scaleX(0.9076);transform-origin:0 0;">30/03/2017</div>
<svg class="a" style="left:1322px;top:739px" width="30" height="26">
<path d="M1.5 1.5 H19.5 V15.5 H8 L5 19 V15.5 H1.5Z" fill="#fff"/><path d="M5 5.5 H16 M5 8.5 H16 M5 11.5 H13" stroke="#110b13" stroke-width="1.1"/>
<circle cx="18.5" cy="17.5" r="7.5" fill="#3b3b3b" stroke="#110b13" stroke-width="1"/></svg>
<div class="t" style="left:1338.50px;top:751px;font-size:12.57px;color:#fff;font-weight:bold;transform:scaleX(0.6450);transform-origin:0 0;">1</div>
</body></html>
